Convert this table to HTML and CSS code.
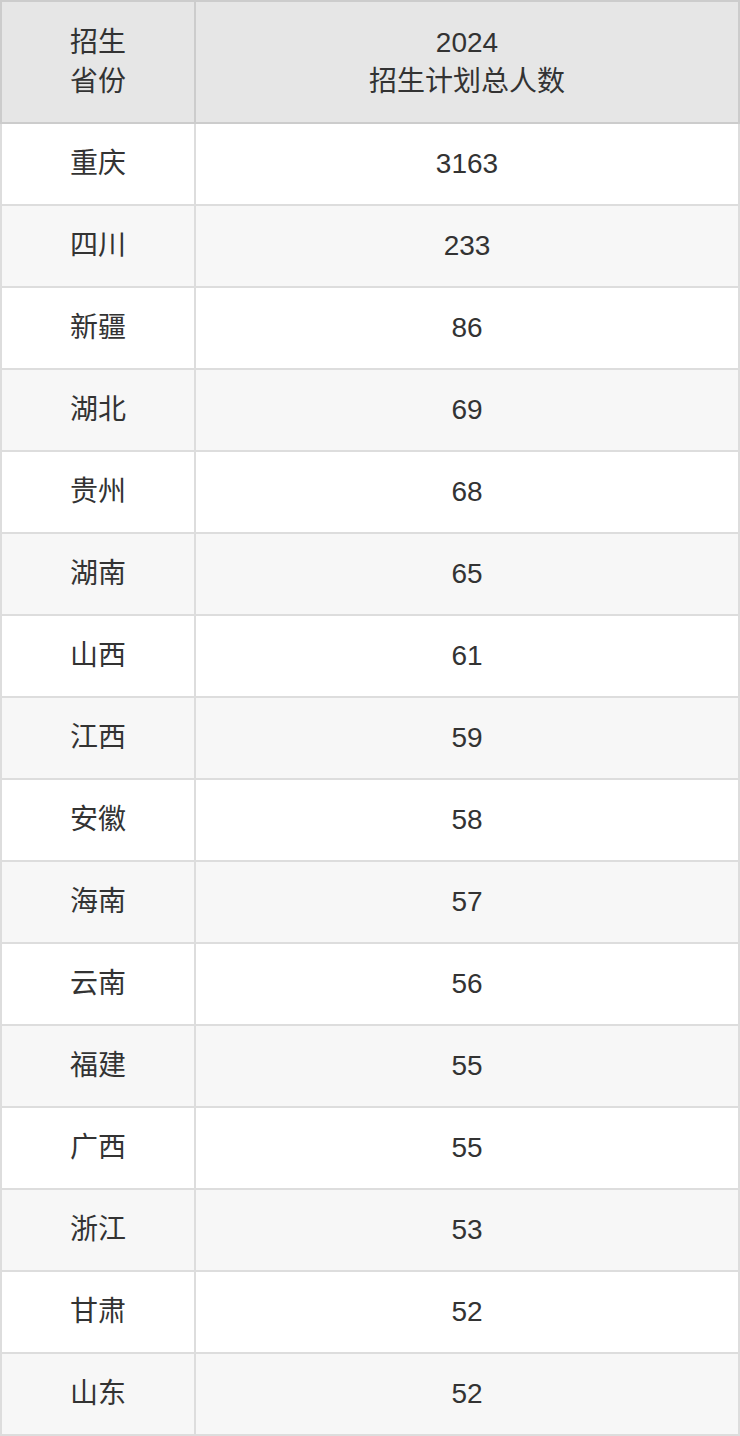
FILE: index.html
```html
<!DOCTYPE html>
<html lang="zh-CN">
<head>
<meta charset="utf-8">
<title>招生计划</title>
<link rel="stylesheet" href="styles.css">
</head>
<body>
<table class="plan">
  <thead>
    <tr><th class="c1">招生<br>省份</th><th class="c2">2024<br>招生计划总人数</th></tr>
  </thead>
  <tbody>
    <tr><td>重庆</td><td>3163</td></tr>
    <tr><td>四川</td><td>233</td></tr>
    <tr><td>新疆</td><td>86</td></tr>
    <tr><td>湖北</td><td>69</td></tr>
    <tr><td>贵州</td><td>68</td></tr>
    <tr><td>湖南</td><td>65</td></tr>
    <tr><td>山西</td><td>61</td></tr>
    <tr><td>江西</td><td>59</td></tr>
    <tr><td>安徽</td><td>58</td></tr>
    <tr><td>海南</td><td>57</td></tr>
    <tr><td>云南</td><td>56</td></tr>
    <tr><td>福建</td><td>55</td></tr>
    <tr><td>广西</td><td>55</td></tr>
    <tr><td>浙江</td><td>53</td></tr>
    <tr><td>甘肃</td><td>52</td></tr>
    <tr><td>山东</td><td>52</td></tr>
  </tbody>
</table>
</body>
</html>
```
FILE: styles.css
```css
html, body {
  margin: 0;
  padding: 0;
  background: #ffffff;
}
.plan {
  width: 740px;
  border-collapse: collapse;
  table-layout: fixed;
  font-family: "Liberation Sans", "Noto Sans CJK SC", sans-serif;
  font-size: 28px;
  color: #333333;
}
.plan th,
.plan td {
  border: 2px solid #dddddd;
  text-align: center;
  vertical-align: middle;
  padding: 0;
  font-weight: normal;
}
.plan th {
  background: #e6e6e6;
  border-color: #cccccc;
  height: 120px;
  line-height: 39px;
}
.plan .c1 {
  width: 192px;
}
.plan td {
  height: 80px;
  line-height: 32px;
}
.plan tbody tr:nth-child(even) td {
  background: #f7f7f7;
}
```
